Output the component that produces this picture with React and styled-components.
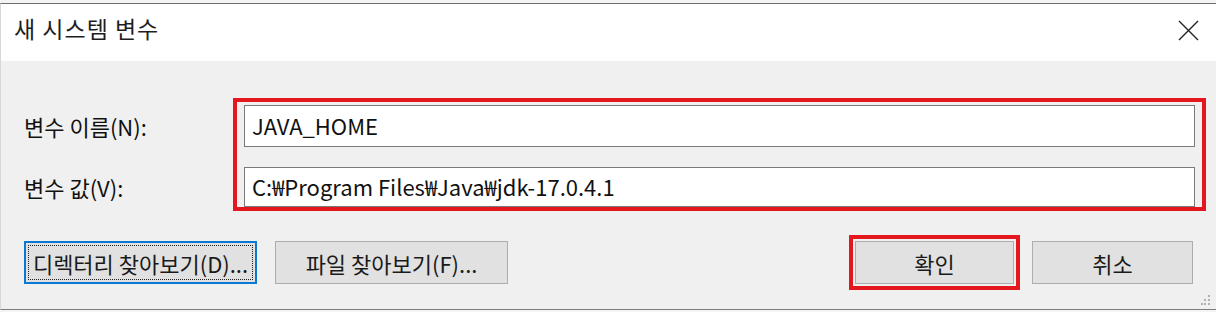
import React from "react";
import styled, { createGlobalStyle } from "styled-components";

const GlobalStyle = createGlobalStyle`
  body {
    margin: 0;
    background: #f4f4f4;
    font-family: "Noto Sans CJK KR", "Noto Sans", sans-serif;
  }
`;

const Frame = styled.div`
  width: 1216px;
  height: 312px;
  padding-top: 3px;
  box-sizing: border-box;
  overflow: hidden;
`;

const Window = styled.div`
  height: 307px;
  display: flex;
  flex-direction: column;
  border-top: 1px solid #6e6e6e;
  border-bottom: 1px solid #7c7c7c;
  border-left: 1px solid #d8d8d8;
  box-sizing: border-box;
`;

const TitleBar = styled.div`
  height: 57px;
  flex: none;
  display: flex;
  align-items: center;
  justify-content: space-between;
  padding: 0 17px 0 13px;
  background: #ffffff;
`;

const Title = styled.span`
  font-size: 23px;
  color: #1e1e1e;
  letter-spacing: 1px;
  margin-bottom: 9px;
`;

const CloseButton = styled.div`
  width: 22px;
  height: 22px;
  display: flex;
  align-items: center;
  justify-content: center;
  margin-bottom: 4px;
`;

const Body = styled.div`
  flex: 1;
  position: relative;
  background: #f0f0f0;
  padding-top: 37px;
  box-sizing: border-box;
`;

const Form = styled.div`
  display: flex;
  padding: 0 10px 0 23px;
`;

const Labels = styled.div`
  width: 209px;
  display: flex;
  flex-direction: column;
  gap: 20px;
  padding-top: 7px;
`;

const Label = styled.div`
  height: 41px;
  display: flex;
  align-items: center;
  font-size: 22px;
  color: #111;
`;

const Highlight = styled.div`
  flex: 1;
  display: flex;
  flex-direction: column;
  gap: 20px;
  border: 4px solid #e3171d;
  padding: 3px 7px 0 7px;
`;

const Field = styled.div`
  height: ${(p) => p.$h}px;
  display: flex;
  align-items: center;
  padding: 0 7px 2px;
  background: #ffffff;
  border: 1px solid #7a7a7a;
  box-sizing: border-box;
  font-size: 22px;
  color: #111;
  white-space: nowrap;
`;

const ButtonRow = styled.div`
  display: flex;
  justify-content: space-between;
  padding: 0 23px;
  margin-top: 30px;
`;

const Group = styled.div`
  display: flex;
  gap: 18px;
`;

const Button = styled.div`
  position: relative;
  width: ${(p) => p.$w}px;
  height: 43px;
  display: flex;
  align-items: center;
  justify-content: center;
  background: #e1e1e1;
  border: ${(p) => (p.$focused ? "2px solid #0a78d4" : "1px solid #adadad")};
  box-sizing: border-box;
  font-size: 22px;
  color: #1a1a1a;
  white-space: nowrap;
  outline: ${(p) => (p.$marked ? "4px solid #e3171d" : "none")};
  outline-offset: 2px;

  &::after {
    content: "";
    display: ${(p) => (p.$focused ? "block" : "none")};
    position: absolute;
    inset: 2px;
    border: 1px dotted #222;
  }
`;

const Grip = styled.svg`
  position: absolute;
  right: 5px;
  bottom: 3px;
`;

const App = () => {
  return (
    <Frame>
      <GlobalStyle />
      <Window>
        <TitleBar>
          <Title>새 시스템 변수</Title>
          <CloseButton>
            <svg width="21" height="21" viewBox="0 0 21 21">
              <path d="M1 1 L20 20 M20 1 L1 20" stroke="#222" strokeWidth="1.4" fill="none" />
            </svg>
          </CloseButton>
        </TitleBar>
        <Body>
          <Form>
            <Labels>
              <Label>변수 이름(N):</Label>
              <Label>변수 값(V):</Label>
            </Labels>
            <Highlight>
              <Field $h={42}>JAVA_HOME</Field>
              <Field $h={40}>C:₩Program Files₩Java₩jdk-17.0.4.1</Field>
            </Highlight>
          </Form>
          <ButtonRow>
            <Group>
              <Button $w={233} $focused>디렉터리 찾아보기(D)...</Button>
              <Button $w={233}>파일 찾아보기(F)...</Button>
            </Group>
            <Group>
              <Button $w={159} $marked>확인</Button>
              <Button $w={161}>취소</Button>
            </Group>
          </ButtonRow>
          <Grip width="10" height="12" viewBox="0 0 10 12">
            {[
              [7, 1],
              [7, 5],
              [3, 5],
              [7, 9],
              [3, 9],
              [0, 9],
            ].map(([x, y], i) => (
              <rect key={i} x={x} y={y} width="2" height="2" fill="#b0b0b0" />
            ))}
          </Grip>
        </Body>
      </Window>
    </Frame>
  );
};

export default App;
